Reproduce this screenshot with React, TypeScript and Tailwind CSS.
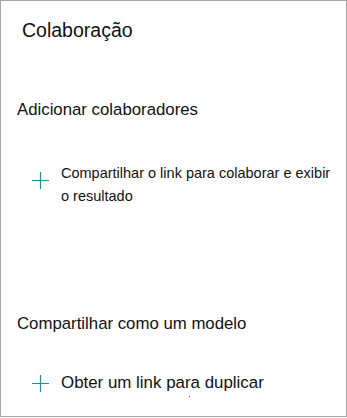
function Plus() {
  return (
    <svg width="19" height="19" viewBox="0 0 19 19" className="shrink-0">
      <path d="M9.5 1v17M1 9.5h17" stroke="#2e8b8b" strokeWidth="1.2" fill="none" />
    </svg>
  );
}

export default function App() {
  const font = { fontFamily: '"Liberation Sans", Arial, sans-serif' };
  return (
    <div
      className="relative w-[347px] h-[417px] border border-[#a6a6a6] bg-white text-[#111]"
      style={font}
    >
      <h1 className="pl-[21px] pt-[17px] text-[19.5px] leading-[24px]">Colaboração</h1>

      <h2 className="pl-[16px] mt-[58px] text-[16.8px] leading-[20px]">Adicionar colaboradores</h2>

      <div className="flex items-start gap-[11px] pl-[30px] mt-[42px]">
        <div className="pt-[9px]">
          <Plus />
        </div>
        <p className="text-[14.5px] leading-[23px] pr-[12px]">
          Compartilhar o link para colaborar e exibir o resultado
        </p>
      </div>

      <h2 className="pl-[16px] mt-[106px] text-[16.8px] leading-[20px]">Compartilhar como um modelo</h2>

      <div className="flex items-center gap-[11px] pl-[30px] mt-[38px]">
        <Plus />
        <p className="text-[16.9px] leading-[22px]">Obter um link para duplicar</p>
      </div>

      <span className="absolute left-[188px] top-[395px] w-[1px] h-[1px] bg-[#555]" />
    </div>
  );
}
